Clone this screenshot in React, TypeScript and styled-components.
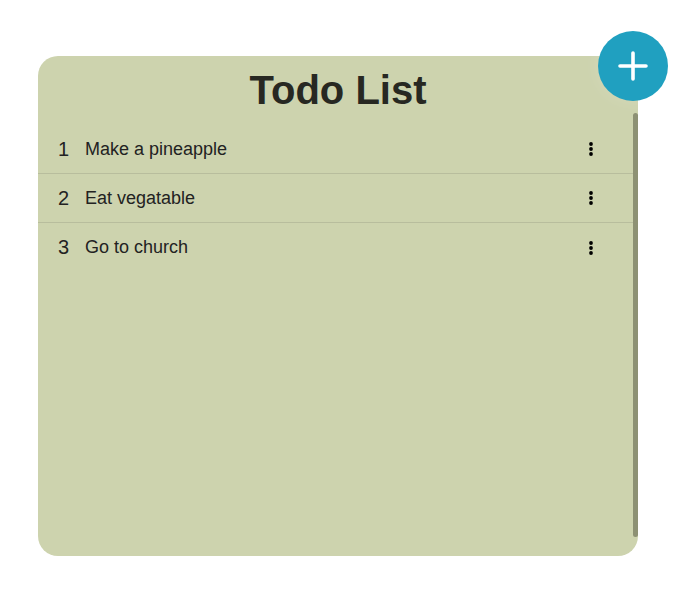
import React from 'react';
import styled, { createGlobalStyle } from 'styled-components';

const todos = [
  { id: 1, title: 'Make a pineapple' },
  { id: 2, title: 'Eat vegatable' },
  { id: 3, title: 'Go to church' },
];

// Three stacked dots for the item menu
const DotsIcon: React.FC = () => (
  <svg width="8" height="18" viewBox="0 0 8 18">
    <circle cx="4" cy="4" r="1.9" fill="#000" />
    <circle cx="4" cy="9" r="1.9" fill="#000" />
    <circle cx="4" cy="14" r="1.9" fill="#000" />
  </svg>
);

const App: React.FC = () => {
  return (
    <>
      <GlobalStyle />
      <Page>
        <Card>
          <Title>Todo List</Title>
          <AddButton aria-label="Add todo">
            <svg width="30" height="30" viewBox="0 0 30 30">
              <path d="M15 2 V28 M2 15 H28" stroke="#fff" strokeWidth="3.6" strokeLinecap="round" />
            </svg>
          </AddButton>
          <Body>
            <List>
              {todos.map((todo) => (
                <Item key={todo.id}>
                  <Num>{todo.id}</Num>
                  <Text>{todo.title}</Text>
                  <MenuButton aria-label="More">
                    <DotsIcon />
                  </MenuButton>
                </Item>
              ))}
            </List>
            <ScrollThumb />
          </Body>
        </Card>
      </Page>
    </>
  );
};

export default App;

const GlobalStyle = createGlobalStyle`
  body {
    margin: 0;
    background: #fff;
    font-family: "Liberation Sans", Arial, sans-serif;
  }
`;

const Page = styled.div`
  padding: 56px 0 0 38px;
`;

const Card = styled.div`
  position: relative;
  width: 600px;
  height: 500px;
  box-sizing: border-box;
  padding-bottom: 19px;
  background: #cdd3ae;
  border-radius: 20px;
  display: flex;
  flex-direction: column;
`;

const Title = styled.h1`
  margin: 0;
  height: 57px;
  font-size: 40px;
  font-weight: bold;
  color: #272822;
  text-align: center;
  line-height: 68px;
`;

const AddButton = styled.button`
  position: absolute;
  top: -25px;
  right: -30px;
  width: 70px;
  height: 70px;
  border: none;
  border-radius: 50%;
  background: #20a0c0;
  display: flex;
  align-items: center;
  justify-content: center;
  padding: 0;
  cursor: pointer;
  box-shadow: 0 0 18px rgba(255, 255, 255, 0.15);
`;

const Body = styled.div`
  flex: 1;
  display: flex;
  min-height: 0;
`;

const List = styled.ul`
  flex: 1;
  list-style: none;
  margin: 0;
  padding: 12px 0 0;
`;

const Item = styled.li`
  display: flex;
  align-items: center;
  height: 49px;
  box-sizing: border-box;
  padding: 0 38px 0 20px;
  border-bottom: 1px solid #b8bd9d;

  &:last-child {
    border-bottom: none;
  }
`;

const Num = styled.span`
  width: 27px;
  font-size: 20px;
  color: #222;
`;

const Text = styled.span`
  flex: 1;
  font-size: 18px;
  color: #222;
`;

const MenuButton = styled.button`
  border: none;
  background: none;
  padding: 0;
  display: flex;
  cursor: pointer;
`;

const ScrollThumb = styled.div`
  width: 5px;
  background: #8d9174;
  border-radius: 3px;
`;
